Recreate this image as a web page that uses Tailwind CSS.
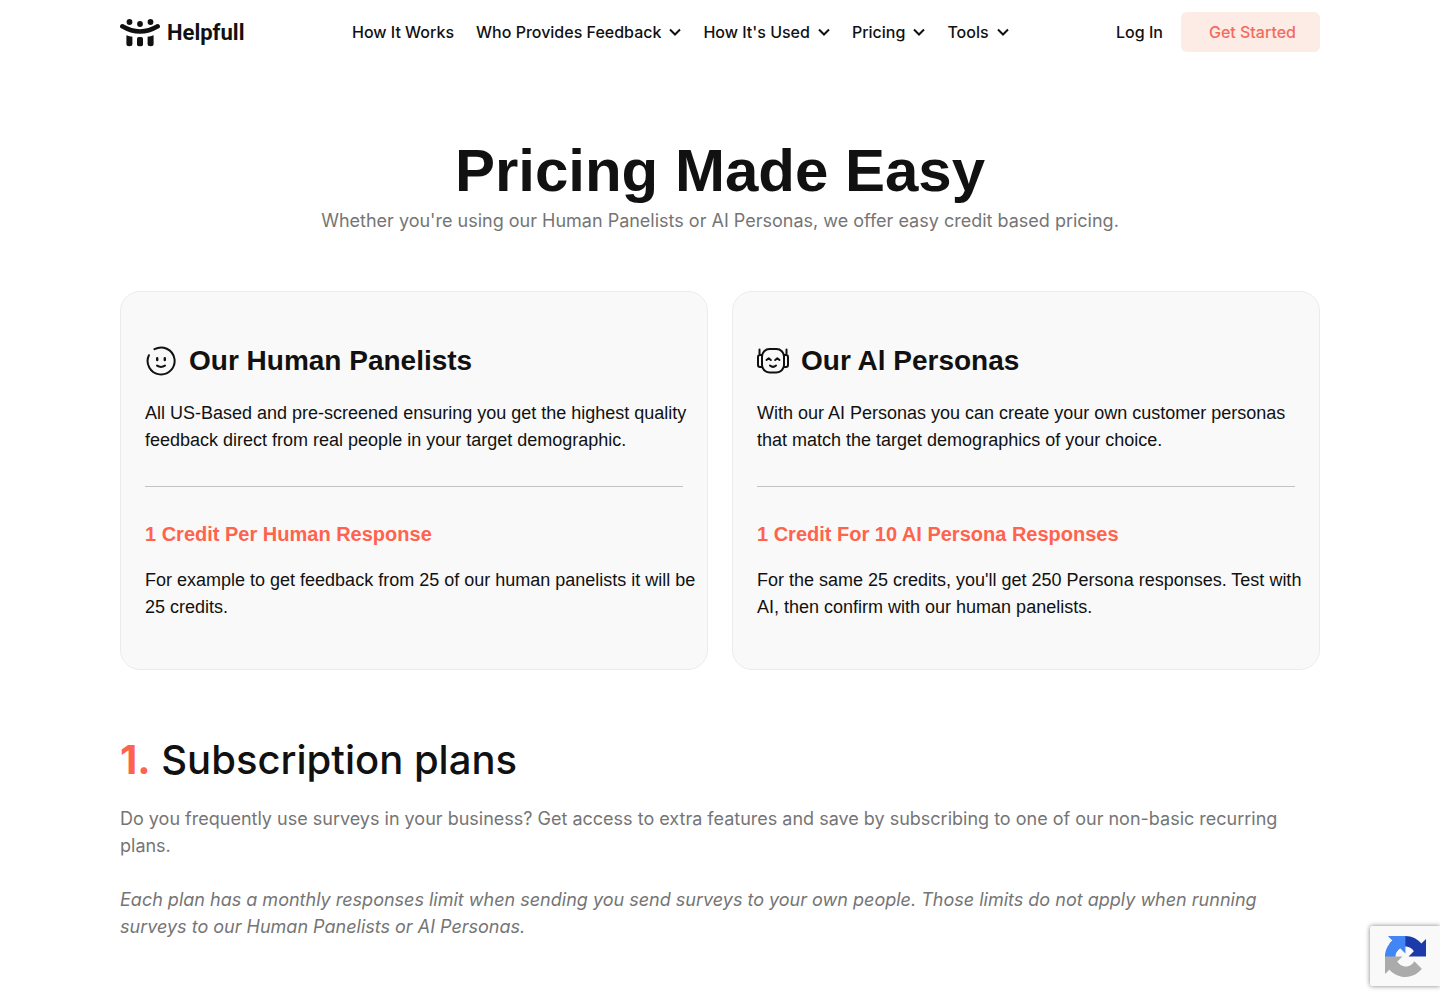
<!DOCTYPE html>
<html lang="en">
<head>
    <meta charset="UTF-8">
    <meta name="viewport" content="width=device-width, initial-scale=1.0">
    <title>Pricing | Helpfull</title>
    <script src="https://cdn.jsdelivr.net/npm/@tailwindcss/browser@4"></script>
</head>
<body class="bg-white text-[#111] font-[Inter,sans-serif] overflow-x-hidden">
    <!-- Header -->
    <header class="max-w-[1200px] mx-auto h-16 flex items-center justify-between">
        <a href="#" class="flex items-center gap-[7px] pt-[2px]">
            <svg class="w-10 h-7" viewBox="0 0 40 28" fill="#111">
                <circle cx="9.500" cy="3" r="2.900"/>
                <circle cx="20" cy="5" r="2.900"/>
                <circle cx="30.500" cy="3" r="2.900"/>
                <path d="M2.300 7.300Q20 17.700 37.700 7.300" fill="none" stroke="#111" stroke-width="4.500" stroke-linecap="round"/>
                <path d="M6.400 16.200Q9.500 17.200 12.400 17.700V25Q12.400 27.200 9.400 27.200Q6.400 27.200 6.400 25Z"/>
                <rect x="17" y="18" width="6" height="9.200" rx="1.800"/>
                <path d="M33.600 16.200Q30.500 17.200 27.600 17.700V25Q27.600 27.200 30.600 27.200Q33.600 27.200 33.600 25Z"/>
            </svg>
            <span class="font-[Roboto,sans-serif] font-bold text-[22px] leading-7">Helpfull</span>
        </a>
        <nav class="flex items-center gap-[22px] font-[450] text-base whitespace-nowrap">
            <a href="#">How It Works</a>
            <button class="flex items-center gap-2">Who Provides Feedback
                <svg class="w-3 h-3" viewBox="0 0 12 12" fill="none" stroke="#111" stroke-width="2"><path d="M1 3.500L6 8.500L11 3.500"/></svg>
            </button>
            <button class="flex items-center gap-2">How It's Used
                <svg class="w-3 h-3" viewBox="0 0 12 12" fill="none" stroke="#111" stroke-width="2"><path d="M1 3.500L6 8.500L11 3.500"/></svg>
            </button>
            <button class="flex items-center gap-2">Pricing
                <svg class="w-3 h-3" viewBox="0 0 12 12" fill="none" stroke="#111" stroke-width="2"><path d="M1 3.500L6 8.500L11 3.500"/></svg>
            </button>
            <button class="flex items-center gap-2">Tools
                <svg class="w-3 h-3" viewBox="0 0 12 12" fill="none" stroke="#111" stroke-width="2"><path d="M1 3.500L6 8.500L11 3.500"/></svg>
            </button>
        </nav>
        <div class="flex items-center gap-[18px] font-[450]">
            <a href="#">Log In</a>
            <a href="#" class="bg-[#fdebe6] text-[#f26b5b] rounded-md h-10 pl-7 pr-6 flex items-center">Get Started</a>
        </div>
    </header>

    <main class="max-w-[1200px] mx-auto">
        <section class="pt-[74px] text-center">
            <h1 class="font-['Liberation_Sans',sans-serif] font-bold text-[60px] leading-[66px]">Pricing Made Easy</h1>
            <p class="text-lg leading-[27px] mt-[3px] text-[#757575]">Whether you're using our Human Panelists or AI Personas, we offer easy credit based pricing.</p>
        </section>

        <!-- Human / AI cards -->
        <section class="mt-[57px] grid grid-cols-2 gap-6 font-['Liberation_Sans',sans-serif] text-lg leading-[27px]">
            <div class="bg-[#f9f9f9] border border-[#ececec] rounded-[20px] px-6 py-12">
                <h2 class="flex items-center gap-3 font-bold text-[28px] leading-[42px]">
                    <svg class="w-8 h-8" viewBox="0 0 32 32" fill="none" stroke="#111" stroke-width="2" stroke-linecap="round">
                        <path d="M9.500 4.200A13.500 13.500 0 1 1 3.900 10.200"/>
                        <path d="M12.200 13.300V15M19.800 13.300V15" stroke-width="2.400"/>
                        <path d="M12 20.600Q16 23.200 20 20.600"/>
                    </svg>
                    Our Human Panelists
                </h2>
                <p class="mt-[18px] -mr-5">All US-Based and pre-screened ensuring you get the highest quality feedback direct from real people in your target demographic.</p>
                <hr class="my-8 border-[#c4c4c4]">
                <h3 class="font-bold text-xl leading-[30px] text-[#ff634d]">1 Credit Per Human Response</h3>
                <p class="mt-[18px] -mr-5">For example to get feedback from 25 of our human panelists it will be 25 credits.</p>
            </div>
            <div class="bg-[#f9f9f9] border border-[#ececec] rounded-[20px] px-6 py-12">
                <h2 class="flex items-center gap-3 font-bold text-[28px] leading-[42px]">
                    <svg class="w-8 h-8" viewBox="0 0 32 32" fill="none" stroke="#111" stroke-width="2" stroke-linecap="round" stroke-linejoin="round">
                        <rect x="5" y="4" width="22" height="23.500" rx="7.500"/>
                        <path d="M2.500 4.500V10M5 10H3Q1 10 1 12V20Q1 22 3 22H5M29.500 4.500V10M27 10H29Q31 10 31 12V20Q31 22 29 22H27"/>
                        <path d="M9.500 15L11.700 13.300L13.800 15M18.200 15L20.300 13.300L22.500 15M13 20.500Q16 23.300 19 20.500"/>
                    </svg>
                    Our Al Personas
                </h2>
                <p class="mt-[18px] -mr-5">With our AI Personas you can create your own customer personas that match the target demographics of your choice.</p>
                <hr class="my-8 border-[#c4c4c4]">
                <h3 class="font-bold text-xl leading-[30px] text-[#ff634d]">1 Credit For 10 AI Persona Responses</h3>
                <p class="mt-[18px] -mr-5">For the same 25 credits, you'll get 250 Persona responses. Test with AI, then confirm with our human panelists.</p>
            </div>
        </section>

        <!-- Subscription plans -->
        <section class="pt-[66px] pb-[60px]">
            <h2 class="font-[450] text-[40px] leading-[48px]"><span class="font-bold text-[#ff634d]">1.</span> Subscription plans</h2>
            <div class="mt-[21px] text-lg leading-[27px] text-[#757575]">
                <p>Do you frequently use surveys in your business? Get access to extra features and save by subscribing to one of our non-basic recurring plans.</p>
                <p class="mt-[27px] italic">Each plan has a monthly responses limit when sending you send surveys to your own people. Those limits do not apply when running surveys to our Human Panelists or AI Personas.</p>
            </div>
        </section>
    </main>

    <!-- reCAPTCHA badge -->
    <div class="fixed right-0 bottom-[14px] w-[70px] h-[60px] bg-[#f9f9f9] rounded-l-[2px] shadow-[0_0_5px_gray] pl-[15px] flex items-center">
        <svg class="w-[41px] h-[41px]" viewBox="0 0 64 64">
            <path fill="#1c3aa9" d="M64 31.955l-.033-1.370V4.687l-7.160 7.160C50.948 4.674 42.033.093 32.050.093c-10.400 0-19.622 4.960-25.458 12.640l11.736 11.860a15.550 15.550 0 0 1 4.754-5.334c2.050-1.600 4.952-2.906 8.968-2.906.485 0 .860.057 1.135.163 4.976.393 9.288 3.140 11.828 7.124l-8.307 8.307L64 31.953"/>
            <path fill="#4285f4" d="M31.862.094l-1.370.033H4.594l7.160 7.160C4.580 13.147 0 22.060 0 32.046c0 10.400 4.960 19.622 12.640 25.458L24.500 45.768a15.550 15.550 0 0 1-5.334-4.754c-1.600-2.050-2.906-4.952-2.906-8.968 0-.485.057-.860.163-1.135.393-4.976 3.140-9.288 7.124-11.828l8.307 8.307L31.860.095"/>
            <path fill="#ababab" d="M.001 32.045l.033 1.370v25.898l7.160-7.160c5.860 7.173 14.774 11.754 24.760 11.754 10.400 0 19.622-4.960 25.458-12.640l-11.736-11.860a15.550 15.550 0 0 1-4.754 5.334c-2.050 1.600-4.952 2.906-8.968 2.906-.485 0-.860-.057-1.135-.163-4.976-.393-9.288-3.140-11.828-7.124l8.307-8.307c-10.522.040-22.400.066-27.295-.005"/>
        </svg>
    </div>
</body>
</html>
